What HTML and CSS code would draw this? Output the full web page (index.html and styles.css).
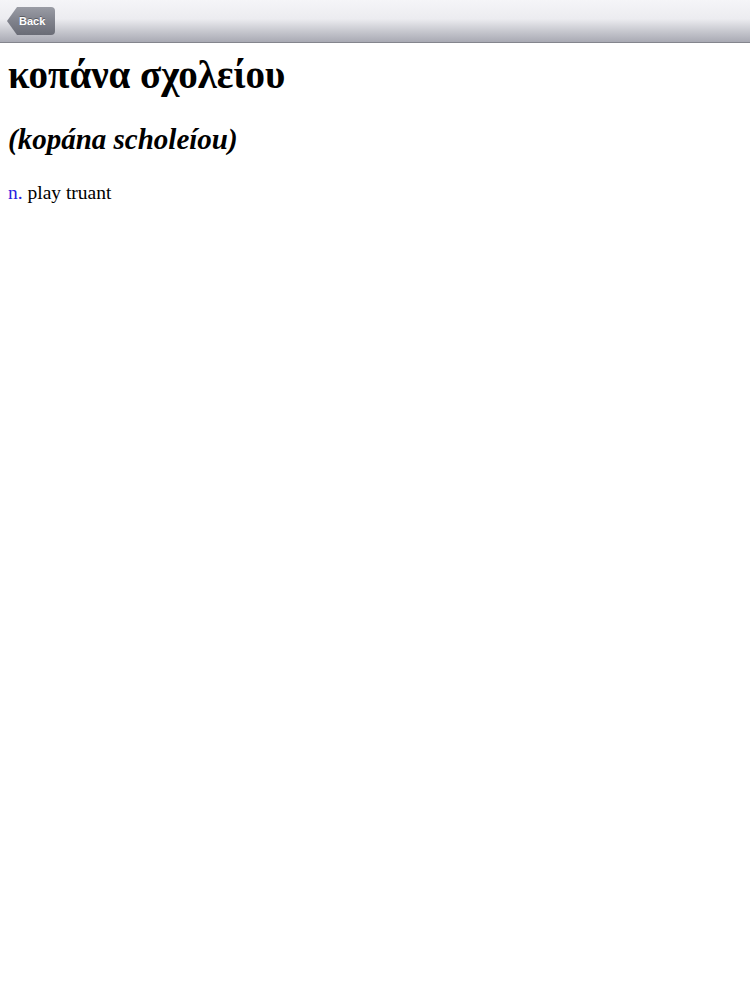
FILE: index.html
```html
<!DOCTYPE html>
<html>
<head>
<meta charset="utf-8">
<link rel="stylesheet" href="styles.css">
</head>
<body>
<div class="toolbar">
  <div class="back">Back</div>
</div>
<div class="content">
  <h1 class="word">κοπάνα σχολείου</h1>
  <h2 class="translit">(kopána scholeíou)</h2>
  <p class="def"><span class="pos">n.</span> play truant</p>
</div>
</body>
</html>
```
FILE: styles.css
```css
html, body {
  margin: 0;
  padding: 0;
  background: #ffffff;
}
body {
  font-family: "Liberation Serif", "DejaVu Serif", serif;
  color: #000;
}
.toolbar {
  height: 42px;
  border-bottom: 1px solid #84858d;
  background: linear-gradient(to bottom, #f5f5f8 0%, #ececf0 45%, #c6c7ce 75%, #a9aab4 100%);
  display: flex;
  align-items: center;
  padding-left: 7px;
}
.back {
  height: 28px;
  line-height: 28px;
  padding: 0 0 0 12px;
  font-family: "Liberation Sans", Arial, sans-serif;
  font-weight: bold;
  font-size: 11px;
  color: #fff;
  text-shadow: 0 -1px 0 rgba(0,0,0,0.35);
  background: linear-gradient(to bottom, #9a9ca5 0%, #80828c 50%, #6a6c76 100%);
  border-radius: 0 4px 4px 0;
  clip-path: polygon(10px 0, 100% 0, 100% 100%, 10px 100%, 0 50%);
  box-sizing: border-box;
  width: 48px;
  margin-top: 0;
}
.content {
  padding: 0 8px;
}
.word {
  margin: 10px 0 0;
  font-size: 39px;
  font-weight: bold;
  line-height: 44px;
}
.translit {
  margin: 24px 0 0;
  font-size: 29px;
  font-style: italic;
  font-weight: bold;
  line-height: 36px;
}
.def {
  margin: 24px 0 0;
  font-size: 19.5px;
  line-height: 24px;
}
.pos {
  color: #2a1ee0;
}
```
